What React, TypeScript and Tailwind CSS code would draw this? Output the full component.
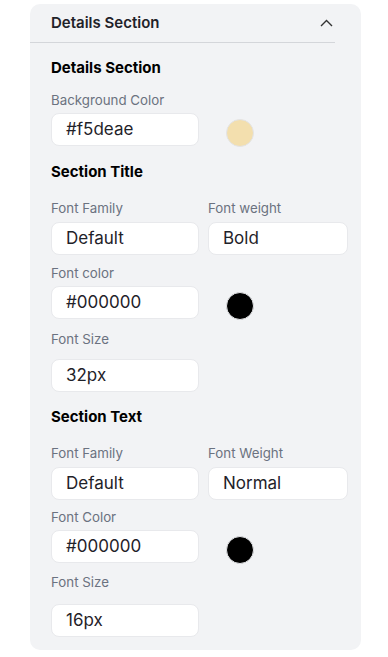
import React from "react";

const font = { fontFamily: "Inter, 'Noto Sans', sans-serif" };

function Label({ children, className = "" }: { children: React.ReactNode; className?: string }) {
  return <div className={`text-[13.3px] leading-[16px] text-[#6b7280] ${className}`}>{children}</div>;
}

function Input({ value, w = "w-[148px]" }: { value: string; w?: string }) {
  return (
    <div className={`${w} h-[33px] rounded-[8px] bg-white border border-[#e8e9ec] flex items-center px-[14px] text-[17px] text-[#1f2229]`}>
      {value}
    </div>
  );
}

function Swatch({ color }: { color: string }) {
  return <div className="w-[28px] h-[28px] rounded-full border border-[#e3e4e7] mt-[6px] ml-[27px]" style={{ backgroundColor: color }} />;
}

function Heading({ children, className = "" }: { children: React.ReactNode; className?: string }) {
  return <div className={`text-[15px] leading-[20px] font-bold text-black ${className}`}>{children}</div>;
}

export default function App() {
  return (
    <div className="w-[388px] h-[657px] bg-white pt-[4px]" style={font}>
      <div className="ml-[30px] w-[331px] h-[646px] bg-[#f2f3f5] rounded-[10px]">
        <div className="mr-[26px] h-[39px] border-b border-[#d4d6da] flex items-center justify-between pl-[21px] pr-[2px]">
          <span className="text-[15px] font-semibold text-[#1f2229]">Details Section</span>
          <svg width="13" height="8" viewBox="0 0 13 8" fill="none">
            <path d="M1 7L6.5 1.5L12 7" stroke="#333" strokeWidth="1.4" />
          </svg>
        </div>
        <div className="pl-[21px]">
          <Heading className="mt-[15px]">Details Section</Heading>
          <Label className="mt-[14px]">Background Color</Label>
          <div className="flex items-start mt-[5px]">
            <Input value="#f5deae" />
            <Swatch color="#f3dfae" />
          </div>

          <Heading className="mt-[15px]">Section Title</Heading>
          <div className="flex gap-[9px] mt-[18px]">
            <div>
              <Label>Font Family</Label>
              <div className="mt-[6px]"><Input value="Default" /></div>
            </div>
            <div>
              <Label>Font weight</Label>
              <div className="mt-[6px]"><Input value="Bold" w="w-[140px]" /></div>
            </div>
          </div>
          <Label className="mt-[10px]">Font color</Label>
          <div className="flex items-start mt-[5px]">
            <Input value="#000000" />
            <Swatch color="#000000" />
          </div>
          <Label className="mt-[11px]">Font Size</Label>
          <div className="mt-[12px]"><Input value="32px" /></div>

          <Heading className="mt-[15px]">Section Text</Heading>
          <div className="flex gap-[9px] mt-[18px]">
            <div>
              <Label>Font Family</Label>
              <div className="mt-[6px]"><Input value="Default" /></div>
            </div>
            <div>
              <Label>Font Weight</Label>
              <div className="mt-[6px]"><Input value="Normal" w="w-[140px]" /></div>
            </div>
          </div>
          <Label className="mt-[9px]">Font Color</Label>
          <div className="flex items-start mt-[5px]">
            <Input value="#000000" />
            <Swatch color="#000000" />
          </div>
          <Label className="mt-[10px]">Font Size</Label>
          <div className="mt-[14px]"><Input value="16px" /></div>
        </div>
      </div>
    </div>
  );
}
